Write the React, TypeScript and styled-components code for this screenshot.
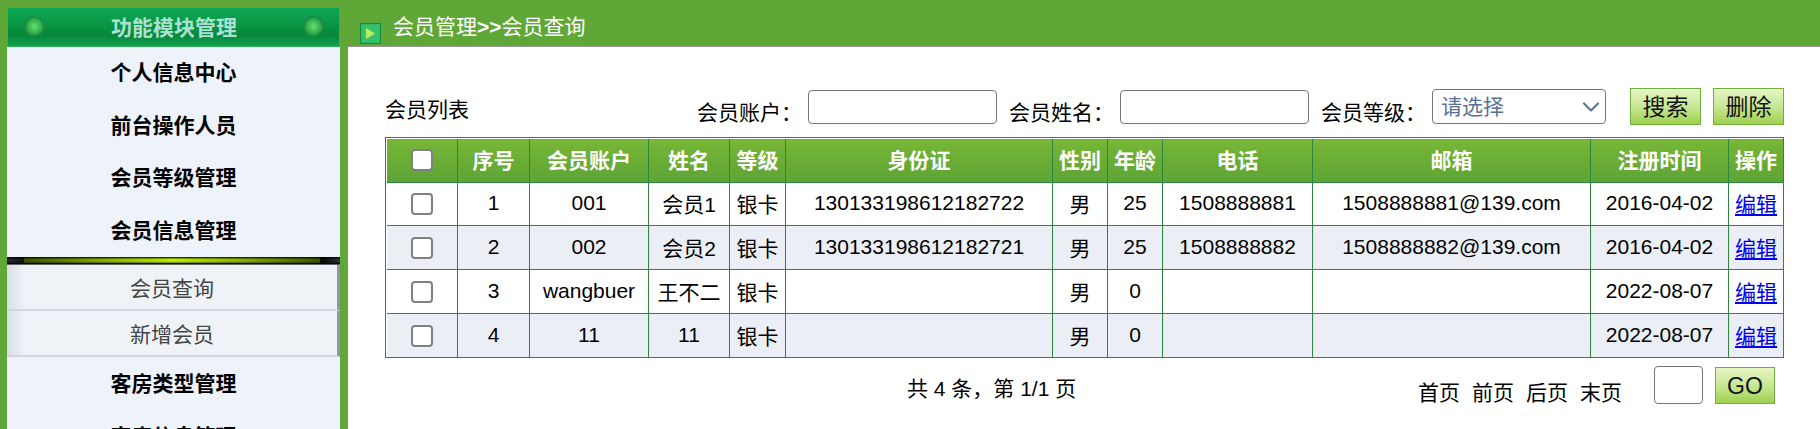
// App.tsx
import React from 'react';
import styled, { createGlobalStyle } from 'styled-components';
import { ChevronDown } from 'lucide-react';

const GlobalStyle = createGlobalStyle`
  html, body {
    margin: 0;
    padding: 0;
    height: 429px;
    overflow: hidden;
    background: #fff;
    color: #000;
    font-family: "Liberation Sans", "Noto Sans CJK SC", sans-serif;
    font-size: 21px;
  }
  * {
    box-sizing: border-box;
  }
`;

const Page = styled.div`
  display: flex;
  height: 429px;
  overflow: hidden;
`;

const Sidebar = styled.aside`
  width: 348px;
  flex: none;
  padding: 7px 8px 0 7px;
  background: #5fa736;
`;

const SideTitle = styled.div`
  height: 40px;
  display: flex;
  align-items: center;
  justify-content: space-between;
  padding: 0 15px 2px 16px;
  border: 1px solid #2fb45c;
  background: linear-gradient(#0ba653 0%, #0a9a48 35%, #07863a 72%, #12a24f 100%);
  color: #a9e2d2;
  font-weight: bold;
`;

const Lamp = styled.span`
  width: 21px;
  height: 21px;
  border-radius: 50%;
  border: 2px solid #1f8a40;
  background: radial-gradient(circle, #66e070 0%, #36b552 50%, #1c9040 100%);
`;

const MenuList = styled.nav`
  background: #edf2fb;
  height: 382px;
  overflow: hidden;
`;

const ActiveBar = styled.div`
  height: 8px;
  background:
    linear-gradient(#000 0%, rgba(0, 0, 0, 0) 28%, rgba(0, 0, 0, 0) 62%, rgba(0, 0, 0, 0.95) 80%, #8a8f96 100%),
    linear-gradient(90deg, #2a2a2a 0, #111 5%, #3c5200 5.2%, #88b000 30%, #b8ec00 50%, #88b000 70%, #3c5200 94%, #050505 94.2%, #333 100%);
`;

const MenuItem = styled.div`
  height: 52.5px;
  line-height: 52px;
  text-align: center;
  font-weight: bold;
  ${ActiveBar} ~ & {
    line-height: 54px;
  }
`;

const SubItem = styled.div`
  height: 46px;
  line-height: 48px;
  text-align: center;
  color: #444;
  border-bottom: 2px solid #d2d6dc;
  border-right: 3px solid #8c97a8;
  background: linear-gradient(90deg, #d9dde5 0, #eff3f7 18px);
`;

const Main = styled.main`
  flex: 1;
  min-width: 0;
`;

const TopBar = styled.header`
  height: 47px;
  display: flex;
  align-items: flex-start;
  padding-left: 12px;
  background: #5fa736;
  border-bottom: 1px solid #999;
  color: #fff;
`;

const PlayIcon = styled.svg`
  width: 21px;
  height: 21px;
  flex: none;
  margin-top: 23px;
`;

const Crumb = styled.span`
  margin-left: 12px;
  line-height: 54px;
`;

const CrumbSep = styled.b`
  font-weight: bold;
`;

const Content = styled.section`
  padding: 41px 36px 0 37px;
`;

const Toolbar = styled.div`
  height: 36px;
  display: flex;
  align-items: flex-start;
  margin-bottom: 13px;
`;

const ListTitle = styled.span`
  line-height: 44px;
  margin-right: auto;
`;

const FilterLabel = styled.label`
  line-height: 50px;
  margin-right: 6px;
`;

const TextInput = styled.input<{ $w: number }>`
  width: ${(p) => p.$w}px;
  height: 34px;
  margin: 2px 12px 0 0;
  padding: 0 6px;
  border: 1px solid #767676;
  border-radius: 4px;
  background: #fff;
  font: inherit;
`;

const SelectWrap = styled.div`
  position: relative;
  width: 174px;
  height: 35px;
  margin: 1px 24px 0 0;
`;

const Select = styled.select`
  width: 100%;
  height: 100%;
  padding: 0 8px;
  appearance: none;
  border: 1px solid #767676;
  border-radius: 4px;
  background: #fff;
  color: #5b7096;
  font: inherit;
  line-height: 30px;
`;

const SelectArrow = styled(ChevronDown)`
  position: absolute;
  top: 4px;
  right: 1px;
  width: 28px;
  height: 28px;
  color: #56709a;
  pointer-events: none;
`;

const GreenButton = styled.button<{ $w: number }>`
  width: ${(p) => p.$w}px;
  height: 37px;
  padding: 0;
  border: 1px solid #6fb03c;
  background: linear-gradient(#e6f5c4 0%, #c8e795 50%, #9fd04e 100%);
  color: #111;
  font: inherit;
  font-size: 23px;
  line-height: 34px;
`;

const DeleteButton = styled(GreenButton)`
  margin-left: 12px;
`;

const Table = styled.table`
  width: 1399px;
  table-layout: fixed;
  border-collapse: separate;
  border-spacing: 0;
  border: 1px solid #2e8540;
  padding: 1px 0 0 1px;
`;

const Col = styled.col<{ $w: number }>`
  width: ${(p) => p.$w}px;
`;

const HeadCell = styled.th`
  height: 44px;
  padding: 0 0 4px;
  color: #fff;
  font-weight: bold;
  text-align: center;
  background: linear-gradient(#78b736 0%, #5da435 100%);
  border-right: 1px solid #2e8540;
  border-bottom: 1px solid #2e8540;
  &:last-child {
    border-right: 0;
  }
`;

const Row = styled.tr<{ $h: number; $alt: boolean }>`
  height: ${(p) => p.$h}px;
  background: ${(p) => (p.$alt ? '#ebeff5' : '#fff')};
`;

const Cell = styled.td`
  padding: 0 0 2px;
  text-align: center;
  border-right: 1px solid #2e8540;
  border-bottom: 1px solid #2e8540;
  tr:last-child > & {
    border-bottom: 0;
  }
  &:last-child {
    border-right: 0;
  }
`;

const Check = styled.input`
  display: block;
  width: 22px;
  height: 22px;
  margin: 2px auto 0;
  appearance: none;
  border: 2px solid #808080;
  border-radius: 4px;
  background: #fff;
`;

const EditLink = styled.a`
  color: #0000ee;
  text-decoration: underline;
`;

const Footer = styled.footer`
  display: flex;
  align-items: flex-start;
  margin-top: 8px;
  padding: 0 9px 0 522px;
`;

const PageCount = styled.span`
  line-height: 46px;
  margin-right: auto;
`;

const Pager = styled.div`
  display: flex;
  gap: 12px;
  line-height: 54px;
  margin-right: 32px;
`;

const JumpInput = styled.input`
  width: 49px;
  height: 38px;
  padding: 0 4px;
  border: 1px solid #767676;
  border-radius: 4px;
  background: #fff;
  font: inherit;
`;

const GoButton = styled(GreenButton)`
  margin: 1px 0 0 12px;
`;

const menuTop = ['个人信息中心', '前台操作人员', '会员等级管理', '会员信息管理'];
const menuBottom = ['客房类型管理', '客房信息管理'];
const subMenu = ['会员查询', '新增会员'];

const columns = [
  { title: '序号', width: 72 },
  { title: '会员账户', width: 119 },
  { title: '姓名', width: 81 },
  { title: '等级', width: 56 },
  { title: '身份证', width: 267 },
  { title: '性别', width: 55 },
  { title: '年龄', width: 55 },
  { title: '电话', width: 150 },
  { title: '邮箱', width: 278 },
  { title: '注册时间', width: 138 },
  { title: '操作', width: 54 },
];

const members = [
  { no: 1, account: '001', name: '会员1', level: '银卡', idCard: '130133198612182722', sex: '男', age: 25, phone: '1508888881', mail: '1508888881@139.com', date: '2016-04-02', h: 43 },
  { no: 2, account: '002', name: '会员2', level: '银卡', idCard: '130133198612182721', sex: '男', age: 25, phone: '1508888882', mail: '1508888882@139.com', date: '2016-04-02', h: 44 },
  { no: 3, account: 'wangbuer', name: '王不二', level: '银卡', idCard: '', sex: '男', age: 0, phone: '', mail: '', date: '2022-08-07', h: 44 },
  { no: 4, account: '11', name: '11', level: '银卡', idCard: '', sex: '男', age: 0, phone: '', mail: '', date: '2022-08-07', h: 43 },
];

const App: React.FC = () => {
  return (
    <Page>
      <GlobalStyle />
      <Sidebar>
        <SideTitle>
          <Lamp />
          功能模块管理
          <Lamp />
        </SideTitle>
        <MenuList>
          {menuTop.map((m) => (
            <MenuItem key={m}>{m}</MenuItem>
          ))}
          <ActiveBar />
          {subMenu.map((m) => (
            <SubItem key={m}>{m}</SubItem>
          ))}
          {menuBottom.map((m) => (
            <MenuItem key={m}>{m}</MenuItem>
          ))}
        </MenuList>
      </Sidebar>
      <Main>
        <TopBar>
          <PlayIcon viewBox="0 0 21 21">
            <rect x="0.5" y="0.5" width="20" height="20" fill="#2fb862" stroke="#128a4c" />
            <rect x="2" y="2" width="17" height="17" fill="#37c168" />
            <polygon points="6,5 15,10.5 6,16" fill="#b4ee62" />
          </PlayIcon>
          <Crumb>
            会员管理<CrumbSep>&gt;&gt;</CrumbSep>会员查询
          </Crumb>
        </TopBar>
        <Content>
          <Toolbar>
            <ListTitle>会员列表</ListTitle>
            <FilterLabel>会员账户：</FilterLabel>
            <TextInput $w={189} />
            <FilterLabel>会员姓名：</FilterLabel>
            <TextInput $w={189} />
            <FilterLabel>会员等级：</FilterLabel>
            <SelectWrap>
              <Select defaultValue="">
                <option value="">请选择</option>
              </Select>
              <SelectArrow strokeWidth={1.8} />
            </SelectWrap>
            <GreenButton $w={71}>搜索</GreenButton>
            <DeleteButton $w={71}>删除</DeleteButton>
          </Toolbar>
          <Table>
            <colgroup>
              <Col $w={71} />
              {columns.map((c) => (
                <Col key={c.title} $w={c.width} />
              ))}
            </colgroup>
            <thead>
              <tr>
                <HeadCell>
                  <Check type="checkbox" />
                </HeadCell>
                {columns.map((c) => (
                  <HeadCell key={c.title}>{c.title}</HeadCell>
                ))}
              </tr>
            </thead>
            <tbody>
              {members.map((m, i) => (
                <Row key={m.no} $h={m.h} $alt={i % 2 === 1}>
                  <Cell>
                    <Check type="checkbox" />
                  </Cell>
                  <Cell>{m.no}</Cell>
                  <Cell>{m.account}</Cell>
                  <Cell>{m.name}</Cell>
                  <Cell>{m.level}</Cell>
                  <Cell>{m.idCard}</Cell>
                  <Cell>{m.sex}</Cell>
                  <Cell>{m.age}</Cell>
                  <Cell>{m.phone}</Cell>
                  <Cell>{m.mail}</Cell>
                  <Cell>{m.date}</Cell>
                  <Cell>
                    <EditLink href="#">编辑</EditLink>
                  </Cell>
                </Row>
              ))}
            </tbody>
          </Table>
          <Footer>
            <PageCount>共 4 条，第 1/1 页</PageCount>
            <Pager>
              <span>首页</span>
              <span>前页</span>
              <span>后页</span>
              <span>末页</span>
            </Pager>
            <JumpInput />
            <GoButton $w={60}>GO</GoButton>
          </Footer>
        </Content>
      </Main>
    </Page>
  );
};

export default App;
